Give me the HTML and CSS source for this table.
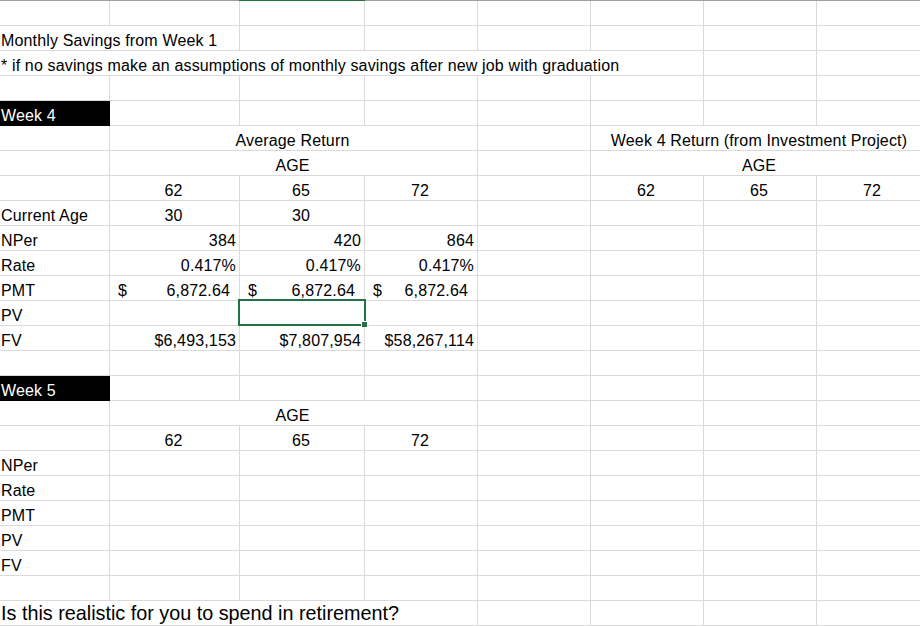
FILE: index.html
```html
<!DOCTYPE html>
<html lang="en">
<head>
<meta charset="utf-8">
<title>Retirement Savings</title>
<link rel="stylesheet" href="styles.css">
</head>
<body>
<div class="colbar"><span class="seg seg-left"></span><span class="seg seg-sel"></span><span class="seg seg-rest"></span></div>
<div class="sheet">
  <!-- r0 -->
  <div class="c"></div><div class="c"></div><div class="c"></div><div class="c"></div><div class="c"></div><div class="c"></div><div class="c"></div><div class="c"></div>
  <!-- r1 -->
  <div class="c s2">Monthly Savings from Week 1</div><div class="c"></div><div class="c"></div><div class="c"></div><div class="c"></div><div class="c"></div><div class="c"></div>
  <!-- r2 -->
  <div class="c s6">* if no savings make an assumptions of monthly savings after new job with graduation</div><div class="c"></div><div class="c"></div>
  <!-- r3 -->
  <div class="c"></div><div class="c"></div><div class="c"></div><div class="c"></div><div class="c"></div><div class="c"></div><div class="c"></div><div class="c"></div>
  <!-- r4 -->
  <div class="c blk">Week 4</div><div class="c"></div><div class="c"></div><div class="c"></div><div class="c"></div><div class="c"></div><div class="c"></div><div class="c"></div>
  <!-- r5 -->
  <div class="c"></div><div class="c s3 m">Average Return</div><div class="c"></div><div class="c s3 m">Week 4 Return (from Investment Project)</div>
  <!-- r6 -->
  <div class="c"></div><div class="c s3 m">AGE</div><div class="c"></div><div class="c s3 m">AGE</div>
  <!-- r7 -->
  <div class="c"></div><div class="c m">62</div><div class="c m">65</div><div class="c m">72</div><div class="c"></div><div class="c m">62</div><div class="c m">65</div><div class="c m">72</div>
  <!-- r8 -->
  <div class="c">Current Age</div><div class="c m">30</div><div class="c m">30</div><div class="c"></div><div class="c"></div><div class="c"></div><div class="c"></div><div class="c"></div>
  <!-- r9 -->
  <div class="c">NPer</div><div class="c r">384</div><div class="c r">420</div><div class="c r">864</div><div class="c"></div><div class="c"></div><div class="c"></div><div class="c"></div>
  <!-- r10 -->
  <div class="c">Rate</div><div class="c r">0.417%</div><div class="c r">0.417%</div><div class="c r">0.417%</div><div class="c"></div><div class="c"></div><div class="c"></div><div class="c"></div>
  <!-- r11 -->
  <div class="c">PMT</div><div class="c acct"><span>$</span><span>6,872.64</span></div><div class="c acct"><span>$</span><span>6,872.64</span></div><div class="c acct"><span>$</span><span>6,872.64</span></div><div class="c"></div><div class="c"></div><div class="c"></div><div class="c"></div>
  <!-- r12 -->
  <div class="c">PV</div><div class="c"></div><div class="c"></div><div class="c"></div><div class="c"></div><div class="c"></div><div class="c"></div><div class="c"></div>
  <!-- r13 -->
  <div class="c">FV</div><div class="c r">$6,493,153</div><div class="c r">$7,807,954</div><div class="c r">$58,267,114</div><div class="c"></div><div class="c"></div><div class="c"></div><div class="c"></div>
  <!-- r14 -->
  <div class="c"></div><div class="c"></div><div class="c"></div><div class="c"></div><div class="c"></div><div class="c"></div><div class="c"></div><div class="c"></div>
  <!-- r15 -->
  <div class="c blk">Week 5</div><div class="c"></div><div class="c"></div><div class="c"></div><div class="c"></div><div class="c"></div><div class="c"></div><div class="c"></div>
  <!-- r16 -->
  <div class="c"></div><div class="c s3 m">AGE</div><div class="c"></div><div class="c"></div><div class="c"></div><div class="c"></div>
  <!-- r17 -->
  <div class="c"></div><div class="c m">62</div><div class="c m">65</div><div class="c m">72</div><div class="c"></div><div class="c"></div><div class="c"></div><div class="c"></div>
  <!-- r18 -->
  <div class="c">NPer</div><div class="c"></div><div class="c"></div><div class="c"></div><div class="c"></div><div class="c"></div><div class="c"></div><div class="c"></div>
  <!-- r19 -->
  <div class="c">Rate</div><div class="c"></div><div class="c"></div><div class="c"></div><div class="c"></div><div class="c"></div><div class="c"></div><div class="c"></div>
  <!-- r20 -->
  <div class="c">PMT</div><div class="c"></div><div class="c"></div><div class="c"></div><div class="c"></div><div class="c"></div><div class="c"></div><div class="c"></div>
  <!-- r21 -->
  <div class="c">PV</div><div class="c"></div><div class="c"></div><div class="c"></div><div class="c"></div><div class="c"></div><div class="c"></div><div class="c"></div>
  <!-- r22 -->
  <div class="c">FV</div><div class="c"></div><div class="c"></div><div class="c"></div><div class="c"></div><div class="c"></div><div class="c"></div><div class="c"></div>
  <!-- r23 -->
  <div class="c"></div><div class="c"></div><div class="c"></div><div class="c"></div><div class="c"></div><div class="c"></div><div class="c"></div><div class="c"></div>
  <!-- r24 -->
  <div class="c s4 big">Is this realistic for you to spend in retirement?</div><div class="c"></div><div class="c"></div><div class="c"></div><div class="c"></div>

  <div class="sel"></div>
  <div class="sel-handle"></div>
</div>
</body>
</html>
```

FILE: styles.css
```css
html, body {
  margin: 0;
  padding: 0;
  overflow: hidden;
  background: #ffffff;
}

body {
  width: 920px;
  height: 626px;
  font-family: "Liberation Sans", Arial, sans-serif;
  font-size: 16px;
  color: #000000;
}

.colbar {
  display: flex;
  width: 930px;
  height: 1px;
}

.seg { display: block; height: 1px; }
.seg-left { width: 239px; background: #9e9e9e; }
.seg-sel { width: 126px; background: #217346; }
.seg-rest { flex: 1; background: #9e9e9e; }

.sheet {
  position: relative;
  display: grid;
  grid-template-columns: 110px 130px 125px 113px 113px 113px 113px 113px;
  grid-auto-rows: 25px;
  width: 930px;
}

.c {
  box-sizing: border-box;
  min-width: 0;
  border-right: 1px solid #dadada;
  border-bottom: 1px solid #dadada;
  padding: 6px 3px 0 1px;
  line-height: 17px;
  white-space: nowrap;
  letter-spacing: 0.15px;
}

.s2 { grid-column: span 2; }
.s3 { grid-column: span 3; }
.s4 { grid-column: span 4; }
.s6 { grid-column: span 6; }

.m { text-align: center; }
.r { text-align: right; }

.blk {
  background: #000000;
  color: #ffffff;
  border-right-color: #000000;
  border-bottom-color: #000000;
}

.acct {
  display: flex;
  justify-content: space-between;
  padding-left: 8px;
  padding-right: 9px;
}

.big {
  font-size: 19.8px;
  line-height: 22px;
  padding-top: 1px;
  letter-spacing: 0;
}

.sel {
  position: absolute;
  left: 238px;
  top: 298px;
  width: 128px;
  height: 27px;
  box-sizing: border-box;
  border: 2px solid #217346;
}

.sel-handle {
  position: absolute;
  left: 361px;
  top: 320px;
  width: 5px;
  height: 5px;
  background: #217346;
  border-left: 1px solid #ffffff;
  border-top: 1px solid #ffffff;
}
```
